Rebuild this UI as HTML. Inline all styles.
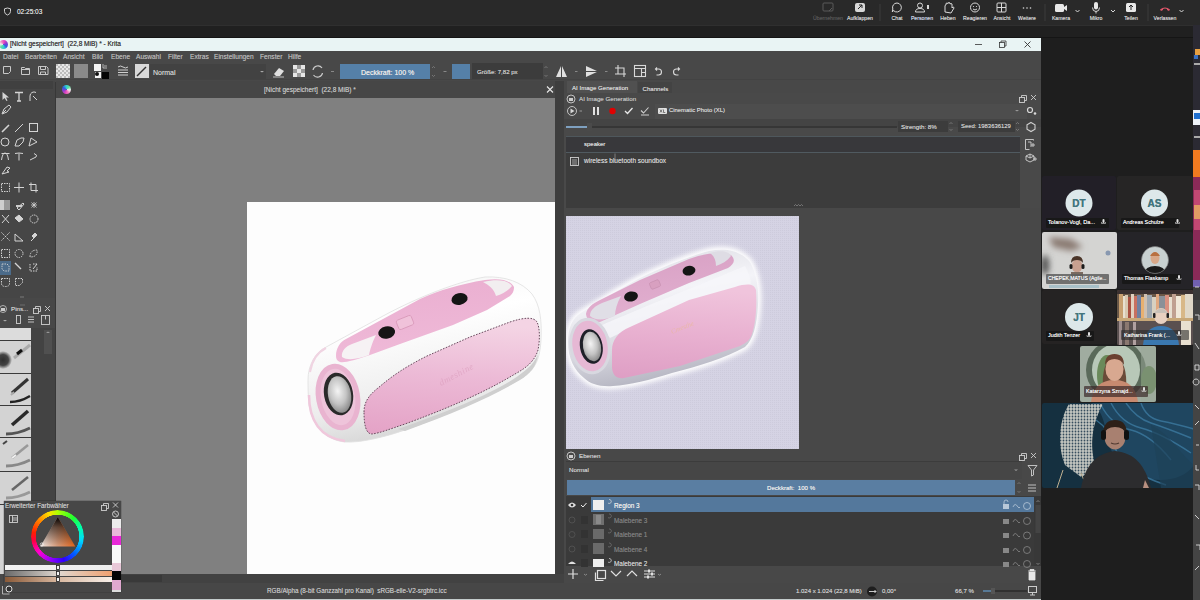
<!DOCTYPE html>
<html><head><meta charset="utf-8">
<style>
*{margin:0;padding:0;box-sizing:border-box}
html,body{width:1200px;height:600px;overflow:hidden;background:#1e1e1e;font-family:"Liberation Sans",sans-serif}
.a{position:absolute}
.t{position:absolute;white-space:nowrap;line-height:1;text-shadow:0 0 0.5px currentColor}
svg{position:absolute;overflow:visible}
.mn{font-size:6.6px;color:#b0b0b0;top:2.5px}
.tl{font-size:5.2px;color:#d0d0d0;top:16px;transform:translateX(-50%)}
.ic{stroke:#d8d8d8;fill:none;stroke-width:1}
</style></head>
<body>
<!-- ============ Teams top bar ============ -->
<div class="a" style="left:0;top:0;width:1200px;height:25px;background:#292929"></div>
<div class="a" style="left:0;top:25px;width:1200px;height:13px;background:#202020;border-top:1px solid #2f2f2f;border-bottom:1px solid #151515"></div>
<svg style="left:0;top:0" width="1200" height="25">
  <path d="M4.5 8.8 L7.5 8 L10.5 8.8 L10.5 11.5 Q10.5 14 7.5 15 Q4.5 14 4.5 11.5 Z" fill="none" stroke="#cfcfcf" stroke-width="1"/>
  <!-- Übernehmen (greyed) -->
  <g stroke="#5a5a5a" fill="none" stroke-width="1"><rect x="823" y="3" width="10" height="8" rx="1"/><path d="M829 11 l3 -3"/></g>
  <!-- Aufklappen -->
  <rect x="855" y="3" width="10" height="9" rx="2" fill="#d8d8d8"/><path d="M858 9 l4 -4 M859 5 h3 v3" stroke="#242424" stroke-width="1" fill="none"/>
  <line x1="880" y1="4" x2="880" y2="21" stroke="#3c3c3c"/>
  <!-- Chat -->
  <path d="M897 3 a4.5 4.5 0 1 1 -3.5 7.5 l-1.2 1.5 l0.5 -3 a4.5 4.5 0 0 1 4.2 -6z" class="ic"/>
  <!-- Personen -->
  <g class="ic"><circle cx="920" cy="5.5" r="2.5"/><path d="M915.5 12 q0 -3.5 4.5 -3.5 q4.5 0 4.5 3.5 z"/></g>
  <rect x="927" y="5" width="2" height="4" fill="#d8d8d8"/>
  <!-- Heben -->
  <path d="M945 12 l0 -6 q0 -1 1 -1 l0 -1.5 q1 -1 2 0 l0 -0.5 q1 -1 2 0 l0 1 q1 -1 2 0 l0 4 l1 -1 q1 0 1 1 l-3 5 z" class="ic"/>
  <!-- Reagieren -->
  <g class="ic"><circle cx="975" cy="7.5" r="4.5"/><path d="M973 9 q2 2 4 0"/></g>
  <circle cx="973.5" cy="6.5" r="0.6" fill="#d8d8d8"/><circle cx="976.5" cy="6.5" r="0.6" fill="#d8d8d8"/>
  <!-- Ansicht -->
  <g class="ic"><rect x="997" y="3" width="9" height="9" rx="1"/><path d="M1001.5 3v9M997 7.5h9"/></g>
  <!-- Weitere -->
  <circle cx="1023.5" cy="8" r="0.8" fill="#d8d8d8"/><circle cx="1027" cy="8" r="0.8" fill="#d8d8d8"/><circle cx="1030.5" cy="8" r="0.8" fill="#d8d8d8"/>
  <line x1="1045" y1="4" x2="1045" y2="21" stroke="#3c3c3c"/>
  <!-- Kamera -->
  <rect x="1055" y="4" width="9" height="8" rx="1.5" fill="#e8e8e8"/><path d="M1064 7 l3 -2 v6 l-3 -2z" fill="#e8e8e8"/>
  <path d="M1075.5 10 l2 2 l2 -2" class="ic" stroke="#bbb"/>
  <!-- Mikro -->
  <rect x="1094" y="2" width="4" height="7.5" rx="2" fill="#e8e8e8"/><path d="M1092.5 7.5 q0 4 3.5 4 q3.5 0 3.5 -4 M1096 11.5 v2" class="ic"/>
  <path d="M1111 10 l2 2 l2 -2" class="ic" stroke="#bbb"/>
  <!-- Teilen -->
  <rect x="1126" y="3" width="10" height="9" rx="1.5" fill="#e8e8e8"/><path d="M1131 10 v-5 M1129 7 l2 -2 l2 2" stroke="#242424" fill="none" stroke-width="1"/>
  <line x1="1148" y1="4" x2="1148" y2="21" stroke="#3c3c3c"/>
  <!-- Verlassen -->
  <path d="M1160 9.5 q5 -4 10 0 l-1 1.5 l-2 -1 v-1 q-2 -1 -4 0 v1 l-2 1z" fill="#e0566a"/>
  <path d="M1179.5 10 l2 2 l2 -2" class="ic" stroke="#bbb"/>
</svg>
<div class="t" style="left:17px;top:9px;font-size:6.5px;color:#d6d6d6">02:25:03</div>
<div class="t tl" style="left:828px;color:#555">Übernehmen</div>
<div class="t tl" style="left:860px">Aufklappen</div>
<div class="t tl" style="left:897px">Chat</div>
<div class="t tl" style="left:922px;color:#c8cfe0">Personen</div>
<div class="t tl" style="left:948px">Heben</div>
<div class="t tl" style="left:975px">Reagieren</div>
<div class="t tl" style="left:1002px">Ansicht</div>
<div class="t tl" style="left:1027px">Weitere</div>
<div class="t tl" style="left:1061px">Kamera</div>
<div class="t tl" style="left:1096px">Mikro</div>
<div class="t tl" style="left:1131px">Teilen</div>
<div class="t tl" style="left:1165px">Verlassen</div>
<!-- ============ Krita window ============ -->
<div class="a" style="left:0;top:38px;width:1041px;height:562px;background:#484848"></div>
<!-- title bar -->
<div class="a" style="left:0;top:38px;width:1041px;height:13px;background:#e9f4f4"></div>
<svg style="left:0;top:38px" width="1041" height="13">
  <defs><linearGradient id="kg" x1="0" y1="0" x2="1" y2="1"><stop offset="0" stop-color="#7a4cc8"/><stop offset=".5" stop-color="#e04c9c"/><stop offset="1" stop-color="#38c8d8"/></linearGradient></defs>
  
  <path d="M975 6.5h7" stroke="#333" stroke-width="0.8"/>
  <g stroke="#333" stroke-width="0.8" fill="none"><rect x="999.5" y="4.5" width="5" height="5"/><path d="M1001 4.5v-1.5h5v5h-1.5"/></g>
  <path d="M1024.5 3.5l6 6M1030.5 3.5l-6 6" stroke="#333" stroke-width="0.9"/>
</svg>
<div class="a" style="left:-1.5px;top:40px;width:9px;height:9px;border-radius:50%;background:conic-gradient(from 20deg,#e040c0,#8040d0,#3060e0,#30d0d0,#60e0a0,#f0f0f0,#f080c0,#e040c0)"></div>
<div class="t" style="left:10px;top:41px;font-size:6.5px;color:#444">[Nicht gespeichert]&nbsp; (22,8 MiB) * - Krita</div>
<!-- menubar -->
<div class="a" style="left:0;top:51px;width:1041px;height:12px;background:#484848"></div>
<div class="a" style="left:0;top:51px;height:12px">
<div class="t mn" style="left:3px">Datei</div>
<div class="t mn" style="left:25px">Bearbeiten</div>
<div class="t mn" style="left:63px">Ansicht</div>
<div class="t mn" style="left:92px">Bild</div>
<div class="t mn" style="left:111px">Ebene</div>
<div class="t mn" style="left:136px">Auswahl</div>
<div class="t mn" style="left:168px">Filter</div>
<div class="t mn" style="left:190px">Extras</div>
<div class="t mn" style="left:214px">Einstellungen</div>
<div class="t mn" style="left:260px">Fenster</div>
<div class="t mn" style="left:288px">Hilfe</div>
</div>
<!-- toolbar -->
<div class="a" style="left:0;top:63px;width:1041px;height:17px;background:#484848;border-bottom:1px solid #434343"></div>
<svg style="left:0;top:0" width="1041" height="100">
  <defs>
    <pattern id="chk" width="4" height="4" patternUnits="userSpaceOnUse"><rect width="4" height="4" fill="#e8e8e8"/><rect width="2" height="2" fill="#bdbdbd"/><rect x="2" y="2" width="2" height="2" fill="#bdbdbd"/></pattern>
  </defs>
  <g stroke="#c8c8c8" fill="none" stroke-width="1">
    <path d="M3.5 66.5h7v5l-2 2h-5z"/>
    <path d="M21.5 67.5h3l1 1h4v6h-8z M21.5 69.5h8"/>
    <path d="M38.5 66.5h8l1.5 1.5v6.5h-9.5z M40.5 66.5v3h5v-3 M40.5 74.5v-2.5h5v2.5"/>
  </g>
  <rect x="56" y="64" width="14" height="14" fill="url(#chk)"/>
  <rect x="74" y="64" width="14" height="14" fill="#8a8a8a"/>
  <rect x="94" y="64" width="7" height="7" fill="#f4f4f4"/>
  <rect x="102" y="72" width="7" height="7" fill="#050505"/>
  <rect x="95" y="72" width="6" height="6" fill="#f4f4f4"/><circle cx="97" cy="74" r="2" fill="#111"/>
  <path d="M103 64v4h4 M104 66l3 0" stroke="#ccc" stroke-width="0.8" fill="none"/>
  <g stroke="#d0d0d0" stroke-width="1" fill="none"><path d="M118 67q2.5 -2 5 0t5 0 M118 70h10M118 72.5h10M118 75h10"/></g>
  <rect x="135" y="64" width="14" height="14" fill="#d8d8d8"/><path d="M137 76l9 -9" stroke="#333" stroke-width="1.5"/>
  <!-- blend combo -->
  <rect x="150" y="64" width="116" height="15" fill="#424242"/>
  <path d="M260 71l2 1.5l2 -1.5" fill="#aaa"/>
  <!-- eraser -->
  <path d="M274 74l5 -6l5 3l-4 5h-4z" fill="#e0e0e0"/><path d="M273 77h11" stroke="#ddd" stroke-width="0.8"/>
  <!-- alpha checker -->
  <g fill="#e6e6e6"><rect x="293" y="65" width="4" height="4"/><rect x="301" y="65" width="4" height="4"/><rect x="297" y="69" width="4" height="4"/><rect x="293" y="73" width="4" height="4"/><rect x="301" y="73" width="4" height="4"/></g>
  <g fill="#9a9a9a"><rect x="297" y="65" width="4" height="4"/><rect x="293" y="69" width="4" height="4"/><rect x="301" y="69" width="4" height="4"/><rect x="297" y="73" width="4" height="4"/></g>
  <!-- reload -->
  <path d="M313 70a5 5 0 0 1 9 -2 M322.5 73a5 5 0 0 1 -9 2" stroke="#ccc" stroke-width="1.2" fill="none"/>
  <path d="M331 71.5h3" stroke="#888"/>
  <!-- opacity slider -->
  <rect x="340" y="64" width="90" height="15" fill="#5580a8"/>
  <path d="M432 68l1.5 -1.5l1.5 1.5M432 75l1.5 1.5l1.5 -1.5" stroke="#888" stroke-width="0.7" fill="none"/>
  <path d="M443.5 71.5h3" stroke="#888"/>
  <rect x="452" y="64" width="18" height="15" fill="#5580a8"/>
  <rect x="472" y="63" width="71" height="16" fill="#3c3c3c"/>
  <path d="M544.5 68l1.5 -1.5l1.5 1.5M544.5 75l1.5 1.5l1.5 -1.5" stroke="#888" stroke-width="0.7" fill="none"/>
  <!-- mirror -->
  <path d="M561 66l-5 11h5z M562 66l5 11h-5z" fill="#e0e0e0"/>
  <path d="M575 71.5h2.5" stroke="#888"/>
  <path d="M586 66l12 5.5l-12 5.5z" fill="#e0e0e0"/><path d="M586 71.5h12" stroke="#484848"/>
  <path d="M605 71.5h2.5" stroke="#888"/>
  <g stroke="#d8d8d8" stroke-width="1.1" fill="none">
    <path d="M618 65v9h8 M615 68h9v9 M615 74h3"/>
    <rect x="634.5" y="65.5" width="11" height="11"/><path d="M634.5 68.5h11M641.5 68.5v8M641.5 72.5h4"/>
    <path d="M657 67.5l-1.5 1.5l1.5 1.5 M655.5 69h3a3 3 0 0 1 0 6h-2"/>
    <path d="M678 67.5l1.5 1.5l-1.5 1.5 M679.5 69h-3a3 3 0 0 0 0 6h2"/>
  </g>
</svg>
<div class="t" style="left:153px;top:68.5px;font-size:7px;color:#c4c4c4">Normal</div>
<div class="t" style="left:361px;top:68.5px;font-size:7px;color:#e6e6e6">Deckkraft: 100 %</div>
<div class="t" style="left:477px;top:68.5px;font-size:6.1px;color:#c8c8c8">Größe: 7,82 px</div>
<!-- ============ toolbox ============ -->
<div class="a" style="left:0;top:81px;width:55px;height:217px;background:#464646"></div>
<div class="a" style="left:55px;top:82px;width:1px;height:492px;background:#383838"></div>
<div class="a" style="left:0;top:81px;width:53px;height:8px;background:#404040"></div>
<svg style="left:0;top:0" width="60" height="300">
 <g stroke="#d4d4d4" stroke-width="1" fill="none">
  <!-- row 96 -->
  <path d="M2.5 92l0 8l2 -2l2 3l1 -0.5l-1.5 -3h3z" fill="#d4d4d4" stroke="none"/>
  <path d="M15 92.5h8M19 92.5v8.5M17 101h4" stroke-width="1.3"/>
  <path d="M30 101v-5a4 4 0 0 1 6 -3.5 M33 96l4 4" />
  <!-- row 110 -->
  <path d="M2 114l2 -5l5 -4l2 2l-4 5z M3 113l3 -3"/>
  <!-- row 128 -->
  <path d="M2 132l3 -3 M5 129l4 -4" stroke-width="1.6"/>
  <path d="M15 132l8 -8"/>
  <rect x="29.5" y="123.5" width="8" height="8"/>
  <!-- row 142 -->
  <circle cx="5" cy="142" r="4"/>
  <path d="M15 146l2 -6l4 -2l3 0l-1 4l-4 4z"/>
  <path d="M29 146l2 -8l6 4z"/>
  <!-- row 155 -->
  <path d="M1.5 160q1 -7 3.5 -7q2.5 0 3.5 7 M1.5 153.5h8"/>
  <path d="M15 153.5q4 -1 8 0 M19 153.5v7"/>
  <path d="M30 160l6 -3q2 -2 -2 -3.5"/>
  <!-- row 170 -->
  <path d="M2 174l5 -7l3 1l-3 3l2 1z"/>
  <!-- row 187 -->
  <rect x="1.5" y="183.5" width="8" height="8" stroke-dasharray="1.5 1"/>
  <path d="M19 182.5v10M14 187.5h10"/>
  <path d="M31 182.5v8h7 M29 184.5h7v8"/>
  <!-- row 205 -->
  <path d="M19 210l5 -6l-1 -1l-6 5z"/>
  <path d="M31 205h6M34 202v6M31.5 202.5l5 5M36.5 202.5l-5 5" stroke-width="0.8"/>
  <!-- row 219 -->
  <path d="M2 223l7 -8M2 215l7 8" stroke-width="1"/>
  <path d="M15 218l4 -3l4 4l-4 3z" fill="#d4d4d4"/>
  <circle cx="34" cy="219" r="4" stroke-dasharray="1.5 0.8"/>
  <!-- row 236 -->
  <path d="M1.5 232.5l8 8M9.5 232.5l-8 8" stroke-dasharray="1.5 1"/>
  <path d="M15 241h8l-8 -7z"/>
  <path d="M31 241l3 -3M32 236l3 -3l2 2l-3 3z" fill="#d4d4d4"/>
  <!-- row 254 -->
  <rect x="1.5" y="249.5" width="8" height="8" stroke-dasharray="1.5 1"/>
  <circle cx="19" cy="253.5" r="4" stroke-dasharray="1.5 1"/>
  <path d="M30 257q0 -7 7 -7q1 7 -7 7z" stroke-dasharray="1.5 1"/>
  <!-- row 268 -->
  <path d="M16 264l5 5M15 263l2 2" stroke-width="1.4"/>
  <path d="M30 264v7h7v-4 M33 264h4" stroke-dasharray="1.5 1"/><path d="M33 269l4 -5" />
  <!-- row 282 -->
  <path d="M1.5 278.5v5q0 3 4 3q4 0 4 -3v-5z" stroke-dasharray="1.5 1"/>
  <path d="M15.5 278.5h7v4l-3 3h-4z" stroke-dasharray="1.5 1"/>
 </g>
 <rect x="0" y="261" width="11" height="14" fill="#4b6b8a"/>
 <path d="M2 264h5l2 2v5h-5l-2 -2z" stroke="#d4d4d4" stroke-width="0.9" fill="none" stroke-dasharray="1.5 1"/>
 <path d="M20 297h4" stroke="#888" stroke-width="0.8"/>
 <rect x="16" y="205" width="6" height="2" fill="#ccc"/>
 <rect x="0" y="200" width="10" height="10" fill="#9a9a9a"/><rect x="0" y="200" width="4" height="10" fill="#cfcfcf"/>
</svg>

<!-- ============ canvas ============ -->
<div class="a" style="left:56px;top:81px;width:499px;height:17px;background:#464646"></div>
<svg style="left:56px;top:82px" width="499" height="16">
  
  <path d="M491 4.5l6 6M497 4.5l-6 6" stroke="#e8e8e8" stroke-width="1.1"/>
</svg>
<div class="a" style="left:62px;top:84.5px;width:9px;height:9px;border-radius:50%;background:conic-gradient(from 200deg,#e040c0,#8040d0,#3060e0,#30d0d0,#60e0a0,#f0f0f0,#f080c0,#e040c0)"></div>
<div class="t" style="left:264px;top:87px;font-size:6.5px;color:#bdbdbd">[Nicht gespeichert]&nbsp; (22,8 MiB) *</div>
<div class="a" style="left:56px;top:98px;width:499px;height:476px;background:#808080"></div>
<div class="a" style="left:247px;top:202px;width:308px;height:372px;background:#fdfdfd"></div>
<!-- canvas scrollbars -->
<div class="a" style="left:555px;top:81px;width:9px;height:493px;background:#3e3e3e"></div>
<div class="a" style="left:56px;top:574px;width:508px;height:9px;background:#424242"></div>
<div class="a" style="left:56px;top:575px;width:106px;height:7px;background:#393939"></div>
<!-- status bar -->
<div class="a" style="left:0;top:583px;width:1041px;height:16px;background:#474747"></div>
<div class="a" style="left:0;top:599px;width:1041px;height:1px;background:#c5cccc"></div>
<div class="t" style="left:267px;top:588px;font-size:6.3px;color:#bdbdbd">RGB/Alpha (8-bit Ganzzahl pro Kanal)&nbsp; sRGB-elle-V2-srgbtrc.icc</div>
<div class="t" style="left:796px;top:588px;font-size:6px;color:#c8c8c8">1.024 x 1.024 (22,8 MiB)</div>
<svg style="left:864px;top:584px" width="20" height="14"><circle cx="8" cy="7.5" r="5" fill="#1e1e1e"/><path d="M5 7.5h7M10.5 6l1.5 1.5l-1.5 1.5" stroke="#ddd" stroke-width="0.9" fill="none"/></svg>
<div class="t" style="left:882px;top:588px;font-size:6px;color:#c8c8c8">0,00°</div>
<div class="t" style="left:955px;top:588px;font-size:6.1px;color:#c8c8c8">66,7 %</div>
<svg style="left:980px;top:584px" width="61" height="14">
  <path d="M3 7h10" stroke="#5d8ab0" stroke-width="1.5"/><path d="M13 7h34" stroke="#2a2a2a" stroke-width="1.5"/>
  <rect x="11" y="4" width="4" height="6" fill="#555"/>
  <rect x="48.5" y="2.5" width="8" height="6" stroke="#ccc" fill="none"/><path d="M50 11h5M52.5 8.5v2.5" stroke="#ccc"/>
</svg>
<!-- ============ brush presets docker ============ -->
<div class="a" style="left:0;top:298px;width:55px;height:276px;background:#484848"></div>
<svg style="left:0;top:298px" width="56" height="276">
  <defs>
    <radialGradient id="blob"><stop offset="0" stop-color="#303030"/><stop offset=".6" stop-color="#444"/><stop offset="1" stop-color="#d0d0d0"/></radialGradient>
  </defs>
  <path d="M20 7h5" stroke="#777" stroke-width="0.8"/>
  <circle cx="3" cy="11" r="3.5" stroke="#ccc" fill="none" stroke-width="0.8"/><rect x="1" y="10" width="4" height="3" fill="#ccc"/>
  <g stroke="#cfcfcf" stroke-width="0.9" fill="none">
    <rect x="33.5" y="10.5" width="5" height="5"/><path d="M35.5 10.5v-2h5v5h-2"/>
    <path d="M45 8l5 5M50 8l-5 5"/>
    <rect x="16.5" y="17.5" width="4" height="8"/>
    <path d="M28 19h6M28 21.5h6M28 24h6"/>
    <rect x="41.5" y="17.5" width="8" height="9"/><path d="M45.5 17.5v4"/>
  </g>
  <path d="M3 22l2 1.5l2 -1.5" fill="#aaa"/>
  <!-- list -->
  <rect x="0" y="30" width="31" height="246" fill="#d3d3d3"/>
  <rect x="0" y="30" width="31" height="12" fill="#dcdcdc"/>
  <g stroke="#3a3a3a" stroke-width="1.2"><path d="M0 42.5h31M0 75.5h31M0 107.5h31M0 139.5h31M0 173.5h31M0 206.5h31"/></g>
  <circle cx="3" cy="62" r="9" fill="url(#blob)"/>
  <path d="M14 60l16 -13" stroke="#aaa" stroke-width="3"/><path d="M17 56l5 -4" stroke="#111" stroke-width="3"/>
  <path d="M12 95l16 -14" stroke="#333" stroke-width="3"/><path d="M11 97l3 -3" stroke="#aaa" stroke-width="2"/>
  <path d="M10 104q10 0 20 -6" stroke="#222" stroke-width="2.5" fill="none"/>
  <path d="M12 127l16 -14" stroke="#2a2a2a" stroke-width="3.5"/>
  <path d="M6 136q12 0 24 -6" stroke="#555" stroke-width="3" fill="none"/>
  <path d="M12 160l16 -13" stroke="#999" stroke-width="2.5"/><path d="M12 160l4 -3" stroke="#eee" stroke-width="2"/>
  <path d="M3 146l4 -3" stroke="#444" stroke-width="2"/>
  <path d="M6 168q12 0 24 -6" stroke="#888" stroke-width="3" fill="none"/>
  <path d="M12 192l16 -13" stroke="#666" stroke-width="2.5"/>
  <path d="M6 200q12 0 24 -6" stroke="#999" stroke-width="3" fill="none"/>
  <rect x="31" y="30" width="24" height="246" fill="#434343"/>
  <rect x="44" y="32" width="8" height="24" fill="#505050"/>
  <path d="M46 35l2 -1.5l2 1.5" fill="#999"/>
</svg>

<div class="t" style="left:11px;top:306px;font-size:6.2px;color:#c8c8c8">Pins...</div>
<!-- ============ color selector (floating) ============ -->
<div class="a" style="left:4px;top:501px;width:117px;height:91px;background:#474747;box-shadow:0 0 1px #222"></div>
<div class="a" style="left:31.3px;top:509.5px;width:53px;height:53px;border-radius:50%;background:conic-gradient(#b0ff00 0deg,#20ff30 40deg,#00ffb0 70deg,#00d8ff 100deg,#0060ff 135deg,#3000ff 165deg,#9000ff 195deg,#ff00d0 230deg,#ff0040 260deg,#ff2000 280deg,#ff9000 315deg,#ffe000 340deg,#b0ff00 360deg);-webkit-mask:radial-gradient(circle,transparent 21.5px,#000 22px,#000 26.5px,transparent 27px);mask:radial-gradient(circle,transparent 21.5px,#000 22px,#000 26.5px,transparent 27px)"></div>
<div class="t" style="left:5px;top:502.5px;font-size:6.3px;color:#c0c0c0">Erweiterter Farbwähler</div>
<svg style="left:0;top:495px" width="130" height="105">
  <defs>
    <linearGradient id="tri1" x1="0" y1="0" x2="1" y2="0"><stop offset="0" stop-color="#f4ece8"/><stop offset=".5" stop-color="#d89a78"/><stop offset="1" stop-color="#e4661c"/></linearGradient>
    <linearGradient id="tri2" x1="0" y1="0" x2="0" y2="1"><stop offset="0" stop-color="#000" stop-opacity="1"/><stop offset=".35" stop-color="#000" stop-opacity=".55"/><stop offset="1" stop-color="#000" stop-opacity="0"/></linearGradient>
    <linearGradient id="sl1" x1="0" x2="1"><stop offset="0" stop-color="#f2f2f2"/><stop offset="1" stop-color="#eeeeee"/></linearGradient>
    <linearGradient id="sl2" x1="0" x2="1"><stop offset="0" stop-color="#6a6a6a"/><stop offset=".5" stop-color="#e0d8d0"/><stop offset="1" stop-color="#f0a070"/></linearGradient>
    <linearGradient id="sl3" x1="0" x2="1"><stop offset="0" stop-color="#8a5a38"/><stop offset=".5" stop-color="#d8b8a0"/><stop offset="1" stop-color="#f8f0ea"/></linearGradient>
  </defs>
  <g stroke="#cfcfcf" stroke-width="0.9" fill="none">
    <rect x="101.5" y="10.5" width="5" height="5"/><path d="M103.5 10.5v-2h5v5h-2"/>
    <path d="M113 7.5l5 5M118 7.5l-5 5"/>
    <rect x="9.5" y="20.5" width="8" height="7"/><path d="M12.5 20.5v7M12.5 23h5M12.5 25h5"/>
    <circle cx="115.5" cy="19" r="3"/><path d="M113.5 17l4 4"/>
  </g>
  <!-- wheel tri -->
  <g transform="translate(57.8 41)">
   <path d="M0 -19L17.5 10.5L-17.5 10.5Z" fill="url(#tri1)"/>
   <path d="M0 -19L17.5 10.5L-17.5 10.5Z" fill="url(#tri2)"/>
   <circle cx="-16" cy="8.5" r="1.6" stroke="#eee" fill="none" stroke-width="0.7"/>
  </g>
  <!-- sliders -->
  <rect x="5" y="70" width="107" height="5" fill="url(#sl1)"/>
  <rect x="5" y="76" width="107" height="5" fill="url(#sl2)"/>
  <rect x="5" y="82" width="107" height="5" fill="url(#sl3)"/>
  <g stroke="#1a1a1a" stroke-width="0.8" fill="#f4f4f4"><rect x="56.5" y="70.5" width="3" height="4"/><rect x="56.5" y="76.5" width="3" height="4"/><rect x="56.5" y="82.5" width="3" height="4"/></g>
  <!-- swatches -->
  <rect x="112" y="24" width="9" height="9" fill="#ececec"/>
  <rect x="112" y="33" width="9" height="8" fill="#e8b8d8"/>
  <rect x="112" y="41" width="9" height="9" fill="#e828d8"/>
  <rect x="112" y="50" width="9" height="18" fill="#f8f8f8"/>
  <rect x="112" y="68" width="9" height="8" fill="#e8c8d8"/>
  <rect x="112" y="76" width="9" height="9" fill="#050505"/>
  <rect x="112" y="85" width="9" height="10" fill="#e0a8d0"/>
  <rect x="112" y="95" width="9" height="2" fill="#ddd"/>
  <circle cx="9" cy="94" r="3" stroke="#ddd" fill="#333" stroke-width="1"/>
  <path d="M2.5 91v8h7" stroke="#ccc" fill="none" stroke-width="0.8"/>
</svg>
<!-- ============ right docker ============ -->
<div class="a" style="left:564px;top:81px;width:477px;height:502px;background:#484848"></div>
<!-- tabs -->
<div class="a" style="left:567px;top:81px;width:70px;height:12px;background:#505050"></div>
<div class="a" style="left:638px;top:82px;width:34px;height:11px;background:#434343"></div>
<div class="t" style="left:572px;top:85px;font-size:6.1px;color:#d4d4d4">AI Image Generation</div>
<div class="t" style="left:642.5px;top:85.5px;font-size:6.1px;color:#cfcfcf">Channels</div>
<!-- AI docker body -->
<div class="a" style="left:564px;top:93px;width:477px;height:115px;background:#494949"></div>
<div class="a" style="left:655px;top:104px;width:372px;height:15px;background:#4d4d4d"></div>
<div class="a" style="left:564px;top:119px;width:477px;height:8px;background:#444"></div>
<div class="t" style="left:579px;top:95.5px;font-size:6.2px;color:#bdbdbd">AI Image Generation</div>
<svg style="left:564px;top:82px" width="477" height="135">
  <g stroke="#cfcfcf" stroke-width="0.9" fill="none">
    <circle cx="7" cy="17" r="4"/>
    <rect x="455.5" y="15.5" width="5" height="5"/><path d="M457.5 15.5v-2h5v5h-2"/>
    <path d="M467 13l5 5M472 13l-5 5"/>
    <circle cx="8" cy="29" r="4.5"/>
  </g>
  <rect x="5" y="16" width="4" height="3" fill="#ccc"/>
  <path d="M6.5 26.5v5l4 -2.5z" fill="#d8d8d8"/>
  <path d="M15.5 29h2.5" stroke="#999"/>
  <rect x="29" y="25" width="2" height="8" fill="#e0e0e0"/><rect x="33" y="25" width="2" height="8" fill="#e0e0e0"/>
  <circle cx="48.5" cy="29" r="3.2" fill="#e00000"/>
  <path d="M61 29l2.5 2.5l5 -5.5" stroke="#e8e8e8" stroke-width="1.3" fill="none"/>
  <path d="M77 28.5l2.5 2.5l5 -5.5 M77 33h8" stroke="#d0d0d0" stroke-width="1.1" fill="none"/>
  <!-- combo -->
  <rect x="94" y="26" width="9" height="6" rx="1" fill="#e0e0e0"/>
  <path d="M96 27.5l2 3M98 27.5l-2 3M99.5 27.5v3h1.8" stroke="#484848" stroke-width="0.7" fill="none"/>
  <path d="M451 28l2 1.5l2 -1.5" fill="#999"/>
  <circle cx="466" cy="28" r="2.5" stroke="#d8d8d8" fill="none" stroke-width="1.2"/><circle cx="471" cy="31.5" r="1.3" fill="#d8d8d8"/>
  <!-- slider -->
  <rect x="2" y="44" width="331" height="2" fill="#363636"/>
  <rect x="2" y="44" width="23" height="2" fill="#7ea0c0"/>
  <rect x="23" y="41" width="5" height="8" fill="#4a4a4a"/>
  <!-- strength / seed -->
  <rect x="334" y="39" width="50" height="11" fill="#3c3c3c"/>
  <path d="M385.5 42l1.5 -1.5l1.5 1.5M385.5 47l1.5 1.5l1.5 -1.5" stroke="#888" stroke-width="0.7" fill="none"/>
  <rect x="394" y="39" width="57" height="11" fill="#3c3c3c"/>
  <path d="M452 42l1.5 -1.5l1.5 1.5M452 47l1.5 1.5l1.5 -1.5" stroke="#888" stroke-width="0.7" fill="none"/>
  <path d="M467 40.5l4 2.3v4.5l-4 2.3l-4 -2.3v-4.5z" stroke="#d0d0d0" fill="none" stroke-width="1.1"/>
  <!-- right side icons -->
  <g stroke="#d0d0d0" stroke-width="0.9" fill="none">
    <path d="M461.5 57.5h8v1 M461.5 57.5v10h4 M464 60h3v5 M467 63h4M469 61v4"/>
    <path d="M462 74l4 -2l4 2v4l-4 2l-4 -2z M466 72v4M462 74l4 2l4 -2"/>
  </g>
  <path d="M469 77h4M471 75v4" stroke="#d0d0d0" stroke-width="0.9"/>
</svg>
<div class="t" style="left:669px;top:107.5px;font-size:5.9px;color:#d0d0d0">Cinematic Photo (XL)</div>
<div class="t" style="left:901px;top:123.5px;font-size:6.2px;color:#c8c8c8">Strength: 8%</div>
<div class="t" style="left:961px;top:123.5px;font-size:5.9px;color:#c8c8c8">Seed: 1983636129</div>
<!-- prompt box -->
<div class="a" style="left:566px;top:136px;width:454px;height:17px;background:#38383b;border-top:1px solid #4e575c;border-bottom:1px solid #505a60"></div>
<div class="t" style="left:584px;top:140.5px;font-size:6px;color:#d8d8d8">speaker</div>
<div class="a" style="left:566px;top:153px;width:454px;height:56px;background:#3c3c3c"></div>
<div class="t" style="left:584px;top:157.5px;font-size:6.5px;color:#c8c8c8">wireless bluetooth soundbox</div>
<svg style="left:564px;top:150px" width="250" height="60">
  <rect x="6.5" y="7.5" width="8" height="8" stroke="#cfcfcf" fill="none" stroke-width="0.9"/><path d="M8 10h5M8 12h5M8 14h5" stroke="#cfcfcf" stroke-width="0.7"/>
  <path d="M51 3.5v8" stroke="#aaa" stroke-width="0.6"/>
  <path d="M230 56l1.5 -1.5l1.5 1.5l1.5 -1.5l1.5 1.5l1.5 -1.5l1.5 1.5" stroke="#999" stroke-width="0.6" fill="none"/>
</svg>
<!-- preview area -->
<div class="a" style="left:564px;top:208px;width:477px;height:241px;background:#484848"></div>
<div class="a" id="prev" style="left:566px;top:216px;width:233px;height:233px;background:#d4d2e2;overflow:hidden"></div>
<div class="a" style="left:796px;top:449px;width:6px;height:1px;background:#777"></div>

<!-- Ebenen -->
<div class="a" style="left:564px;top:449px;width:477px;height:12px;background:#484848"></div>
<div class="t" style="left:579px;top:452.5px;font-size:6.2px;color:#c8c8c8">Ebenen</div>
<svg style="left:564px;top:449px" width="477" height="134">
  <g stroke="#cfcfcf" stroke-width="0.9" fill="none">
    <circle cx="7" cy="7" r="4"/>
    <rect x="455.5" y="6.5" width="5" height="5"/><path d="M457.5 6.5v-2h5v5h-2"/>
    <path d="M467 4l5 5M472 4l-5 5"/>
    <path d="M464 16.5h9l-3.5 4.5v5l-2 1v-6z"/>
    <path d="M464 36h8M464 39h8M464 42h8"/>
  </g>
  <rect x="5" y="6" width="4" height="3" fill="#ccc"/>
</svg>
<div class="a" style="left:566px;top:461px;width:456px;height:18px;background:#464646;border-top:1px solid #3c3c3c"></div>
<div class="t" style="left:569px;top:467px;font-size:6.2px;color:#c8c8c8">Normal</div>
<svg style="left:1013px;top:468px" width="8" height="6"><path d="M1 1.5l2 1.5l2 -1.5" fill="#999"/></svg>
<div class="a" style="left:567px;top:480px;width:448px;height:15px;background:#5a7ea2"></div>
<div class="t" style="left:767px;top:485px;font-size:6.1px;color:#e8e8e8">Deckkraft:&nbsp; 100 %</div>
<svg style="left:1015px;top:480px" width="10" height="16"><path d="M2.5 4l1.5 -1.5l1.5 1.5M2.5 11l1.5 1.5l1.5 -1.5" stroke="#888" stroke-width="0.7" fill="none"/></svg>
<!-- layer list -->
<div class="a" style="left:566px;top:496px;width:468px;height:70px;background:#3a3a3a"></div>
<div class="a" style="left:591px;top:497px;width:443px;height:15px;background:#54789c"></div>
<div class="a" style="left:1034px;top:496px;width:7px;height:70px;background:#383838"></div>
<svg style="left:566px;top:497px" width="475" height="70">
  <g fill="#e0e0e0"><path d="M2 8q4 -5 8 0q-4 5 -8 0z"/></g>
  <circle cx="6" cy="8" r="1.3" fill="#333"/>
  <path d="M15 8l2 2l3.5 -4" stroke="#eee" stroke-width="1" fill="none"/>
  <rect x="27" y="3" width="11" height="10" fill="#efefef"/>
  <path d="M43 2.5a2 2 0 1 1 -1 3.5" stroke="#ddd" stroke-width="0.7" fill="none"/>
  <g fill="#555">
    <rect x="27" y="17" width="11" height="11" fill="#707070"/>
    <rect x="27" y="32" width="11" height="10" fill="#6a6a6a"/>
    <rect x="27" y="46" width="11" height="11" fill="#6a6a6a"/>
  </g>
  <rect x="30" y="18" width="5" height="9" fill="#8a8a8a"/>
  <g stroke="#555" stroke-width="0.8" fill="none"><circle cx="6" cy="23" r="3"/><circle cx="6" cy="37.5" r="3"/><circle cx="6" cy="52" r="3"/></g>
  <g fill="#333"><rect x="15" y="19" width="7" height="8"/><rect x="15" y="33" width="7" height="8"/><rect x="15" y="48" width="7" height="8"/><rect x="15" y="62" width="7" height="8"/></g>
  <path d="M2 67q4 -5 8 0" fill="#e0e0e0"/>
  <rect x="27" y="62" width="11" height="8" fill="#eee"/>
  <g stroke="#777" stroke-width="0.7" fill="none"><path d="M43 17a2 2 0 1 1 -1 3.5M43 32a2 2 0 1 1 -1 3.5M43 46a2 2 0 1 1 -1 3.5"/></g>
  <path d="M43 61.5a2 2 0 1 1 -1 3.5" stroke="#ddd" stroke-width="0.7" fill="none"/>
  <!-- right icons -->
  <g fill="#b8c8d8"><rect x="437" y="7" width="6" height="5"/></g>
  <g stroke="#b8c8d8" stroke-width="0.8" fill="none"><path d="M438 7v-2a2 2 0 0 1 4 0"/><path d="M447 10q2 -5 5 0q1 2 2 0"/><circle cx="461" cy="9" r="3.5"/></g>
  <g fill="#888"><rect x="437" y="22" width="6" height="5"/><rect x="437" y="36" width="6" height="5"/><rect x="437" y="51" width="6" height="5"/><rect x="437" y="65" width="6" height="5"/></g>
  <g stroke="#888" stroke-width="0.8" fill="none">
    <path d="M447 25q2 -5 5 0q1 2 2 0M447 39q2 -5 5 0q1 2 2 0M447 54q2 -5 5 0q1 2 2 0M447 68q2 -5 5 0q1 2 2 0"/>
    <circle cx="461" cy="24" r="3.5"/><circle cx="461" cy="38.5" r="3.5"/><circle cx="461" cy="53" r="3.5"/><circle cx="461" cy="67" r="3.5"/>
  </g>
  <path d="M470.5 5l1.5 -1.5l1.5 1.5M470.5 66l1.5 1.5l1.5 -1.5" stroke="#999" stroke-width="0.7" fill="none"/>
  <rect x="469.5" y="8" width="5" height="28" fill="#444"/>
</svg>
<div class="t" style="left:614px;top:502.5px;font-size:6.4px;color:#e8e8e8">Region 3</div>
<div class="t" style="left:614px;top:517.5px;font-size:6.4px;color:#7a7a7a">Malebene 3</div>
<div class="t" style="left:614px;top:532px;font-size:6.4px;color:#7a7a7a">Malebene 1</div>
<div class="t" style="left:614px;top:546.5px;font-size:6.4px;color:#7a7a7a">Malebene 4</div>
<div class="t" style="left:614px;top:561px;font-size:6.4px;color:#c8c8c8">Malebene 2</div>
<!-- layer buttons -->
<svg style="left:564px;top:566px" width="477" height="16">
  <g stroke="#e0e0e0" stroke-width="1.2" fill="none">
    <path d="M9 3v10M4 8h10"/>
    <rect x="33.5" y="4.5" width="8" height="8"/><path d="M31.5 6.5v8h8"/>
    <path d="M47 5l5 5l5 -5"/>
    <path d="M63 10l5 -5l5 5"/>
    <path d="M80 5h11M80 8h11M80 11h11"/>
  </g>
  <g fill="#e0e0e0"><rect x="84" y="3.5" width="2" height="3"/><rect x="87" y="6.5" width="2" height="3"/><rect x="83" y="9.5" width="2" height="3"/></g>
  <path d="M20 8l1.5 1.2l1.5 -1.2M94 8l1.5 1.2l1.5 -1.2" stroke="#999" stroke-width="0.8" fill="none"/>
  <path d="M464 5h8M466 5v-1.5h4v1.5 M465 6h6v8h-6z" fill="#e8e8e8" stroke="#e8e8e8" stroke-width="0.8"/>
</svg>
<!-- ============ speakers ============ -->
<svg style="left:0;top:0" width="1200" height="600">
  <defs>
    <clipPath id="cpMain"><rect x="247" y="202" width="308" height="372"/></clipPath>
    <clipPath id="cpPrev"><rect x="566" y="216" width="233" height="233"/></clipPath>
    <linearGradient id="bodyG" x1="0" y1="0" x2="0.25" y2="1">
      <stop offset="0" stop-color="#f2f2f2"/><stop offset=".35" stop-color="#ffffff"/><stop offset=".8" stop-color="#ededed"/><stop offset="1" stop-color="#d8d8d8"/>
    </linearGradient>
    <linearGradient id="topG" x1="0" y1="0" x2="0.2" y2="1">
      <stop offset="0" stop-color="#eaaed0"/><stop offset="1" stop-color="#efbad8"/>
    </linearGradient>
    <linearGradient id="frontG" x1="0.1" y1="0" x2="0" y2="1">
      <stop offset="0" stop-color="#f4d4e4"/><stop offset=".45" stop-color="#ecbad6"/><stop offset="1" stop-color="#e4a2c6"/>
    </linearGradient>
    <radialGradient id="grilleG" cx=".45" cy=".4" r=".65">
      <stop offset="0" stop-color="#f4f4f4"/><stop offset=".55" stop-color="#c4c4c4"/><stop offset="1" stop-color="#808080"/>
    </radialGradient>
    <filter id="glow" x="-20%" y="-20%" width="140%" height="140%"><feGaussianBlur stdDeviation="2.5"/></filter>
    <filter id="sb"><feGaussianBlur stdDeviation="0.5"/></filter>
    <pattern id="dith" width="2" height="2" patternUnits="userSpaceOnUse"><rect width="2" height="2" fill="#d5d3e4"/><rect width="1" height="1" fill="#cdcbdc"/></pattern>
    <path id="bodyP" d="M308 380 C308 365 315 352 328 346 L383 316 C420 296 460 281 485 277 C505 276 522 282 532 294 C540 305 542 320 541 340 C540 362 533 372 520 379 C495 394 455 412 405 430 C385 437 360 443 345 442 C325 440 312 425 309 405 C308 395 308 387 308 380 Z"/>
    <path id="frontP" d="M364 412 C364 402 369 395 378 388 C392 376 405 367 427 356 L470 337 L510 322 C525 317 534 317 537 322 C540 328 540 340 538 350 C535 360 528 367 515 374 C495 386 465 402 405 424 C390 429 380 433 372 434 C366 434 364 425 364 412 Z"/>
    <g id="spk">
      <use href="#bodyP" fill="url(#bodyG)" stroke="#e0e0e0" stroke-width="0.8"/>
      <path d="M398 429 C455 409 495 392 518 376 C528 369 535 362 538 354 C537 366 530 374 520 380 C495 395 455 413 405 431 Z" fill="#cfcfcf"/>
      <!-- top panel -->
      <path d="M336 356 C336 348 340 342 346 339 L383 319 L420 299 C440 290 460 284 485 280 C500 278 510 280 514 287 C514 292 512 294 510 296 L487 310 L453 325 L400 344 L370 355 C355 360 345 363 340 362 C337 361 336 359 336 356 Z" fill="url(#topG)"/>
      <path d="M342 357 C341 351 346 346 352 344 L376 335 C372 343 370 350 369 355 C358 359 348 361 342 357 Z" fill="#f6f2f4"/>
      <path d="M483 282 C497 279 508 280 512 286 C508 291 502 294 496 296 C494 289 489 285 483 282 Z" fill="#f2eef0"/>
      <ellipse cx="386.7" cy="332.5" rx="8.5" ry="6.2" transform="rotate(-12 386.7 332.5)" fill="#151515"/>
      <ellipse cx="459.5" cy="299" rx="8.2" ry="5.8" transform="rotate(-12 459.5 299)" fill="#151515"/>
      <rect x="397" y="317.5" width="16" height="10" rx="2" transform="rotate(-22 405 322.5)" fill="#f0c2da" stroke="#d898b8" stroke-width="0.8"/>
      <!-- front panel -->
      <use href="#frontP" fill="url(#frontG)"/>
      <text x="441" y="386" font-size="9" fill="#d898b8" opacity=".55" transform="rotate(-28 441 386)" font-family="Liberation Serif" font-style="italic" letter-spacing="0.5">dmeshine</text>
      <!-- end cap -->
      <path d="M310 372 C312 360 318 352 326 348" stroke="#f0d4e2" stroke-width="2" fill="none"/>
      <path d="M309 395 C309 420 320 438 345 441" stroke="#f0c8dc" stroke-width="2.5" fill="none"/>
      <ellipse cx="338" cy="397" rx="19.5" ry="31" transform="rotate(-10 338 397)" fill="#eec4da" stroke="#e9b4d0" stroke-width="5"/>
      <ellipse cx="338.5" cy="394" rx="14.5" ry="21.5" transform="rotate(-10 338.5 394)" fill="#2a2a2a"/>
      <ellipse cx="339.5" cy="394.5" rx="11.5" ry="18.5" transform="rotate(-10 339.5 394.5)" fill="url(#grilleG)"/>
    </g>
  <linearGradient id="bodyG2" x1="0" y1="0" x2="0.25" y2="1">
      <stop offset="0" stop-color="#d8d8e0"/><stop offset=".4" stop-color="#f4f4f8"/><stop offset=".75" stop-color="#d8d8e0"/><stop offset="1" stop-color="#b8b8c4"/>
    </linearGradient>
    <linearGradient id="topG2" x1="0" y1="0" x2="0.2" y2="1">
      <stop offset="0" stop-color="#d8a0c4"/><stop offset="1" stop-color="#e2b0d0"/>
    </linearGradient>
    <linearGradient id="frontG2" x1="0.1" y1="0" x2="0" y2="1">
      <stop offset="0" stop-color="#f0c4dc"/><stop offset=".5" stop-color="#e8b0d0"/><stop offset="1" stop-color="#de9ec4"/>
    </linearGradient>
    <g id="spk2">
      <use href="#bodyP" fill="url(#bodyG2)" stroke="#d0d0d8" stroke-width="0.8"/>
      <path d="M398 429 C455 409 495 392 518 376 C528 369 535 362 538 354 C537 366 530 374 520 380 C495 395 455 413 405 431 Z" fill="#cfcfcf"/>
      <!-- top panel -->
      <path d="M336 356 C336 348 340 342 346 339 L383 319 L420 299 C440 290 460 284 485 280 C500 278 510 280 514 287 C514 292 512 294 510 296 L487 310 L453 325 L400 344 L370 355 C355 360 345 363 340 362 C337 361 336 359 336 356 Z" fill="url(#topG2)"/>
      <path d="M342 357 C341 351 346 346 352 344 L376 335 C372 343 370 350 369 355 C358 359 348 361 342 357 Z" fill="#e4e2ea"/>
      <path d="M483 282 C497 279 508 280 512 286 C508 291 502 294 496 296 C494 289 489 285 483 282 Z" fill="#dedce4"/>
      <ellipse cx="386.7" cy="332.5" rx="8.5" ry="6.2" transform="rotate(-12 386.7 332.5)" fill="#151515"/>
      <ellipse cx="459.5" cy="299" rx="8.2" ry="5.8" transform="rotate(-12 459.5 299)" fill="#151515"/>
      <rect x="397" y="317.5" width="16" height="10" rx="2" transform="rotate(-22 405 322.5)" fill="#f0c2da" stroke="#d898b8" stroke-width="0.8"/>
      <!-- front panel -->
      <use href="#frontP" fill="url(#frontG2)"/>
      <text x="441" y="386" font-size="9" fill="#d898b8" opacity=".55" transform="rotate(-28 441 386)" font-family="Liberation Serif" font-style="italic" letter-spacing="0.5">dmeshine</text>
      <!-- end cap -->
      <path d="M310 372 C312 360 318 352 326 348" stroke="#f0d4e2" stroke-width="2" fill="none"/>
      <path d="M309 395 C309 420 320 438 345 441" stroke="#f0c8dc" stroke-width="2.5" fill="none"/>
      <ellipse cx="338" cy="397" rx="19.5" ry="31" transform="rotate(-10 338 397)" fill="#eec4da" stroke="#e9b4d0" stroke-width="5"/>
      <ellipse cx="338.5" cy="394" rx="14.5" ry="21.5" transform="rotate(-10 338.5 394)" fill="#2a2a2a"/>
      <ellipse cx="339.5" cy="394.5" rx="11.5" ry="18.5" transform="rotate(-10 339.5 394.5)" fill="url(#grilleG)"/>
    </g>
  </defs>
  <g clip-path="url(#cpMain)">
    <use href="#spk"/>
    <use href="#frontP" fill="none" stroke="#6a4a5e" stroke-width="1" stroke-dasharray="1.6 1.4"/>
  </g>
  <g clip-path="url(#cpPrev)">
    <rect x="566" y="216" width="233" height="233" fill="url(#dith)"/>
    <path d="M568 342 C568 328 572 318 582 312 C600 302 620 288 640 278 C665 266 690 256 709 251 C725 248 740 250 750 262 C757 274 759 290 758 305 C757 325 753 340 745 347 C725 358 700 366 672 373 C650 380 630 385 613 386 C600 387 590 384 584 378 C574 370 568 358 568 342 Z" fill="#ffffff" stroke="#ffffff" stroke-width="6" filter="url(#glow)"/>
    <path d="M568 342 C568 328 572 318 582 312 C600 302 620 288 640 278 C665 266 690 256 709 251 C725 248 740 250 750 262 C757 274 759 290 758 305 C757 325 753 340 745 347 C725 358 700 366 672 373 C650 380 630 385 613 386 C600 387 590 384 584 378 C574 370 568 358 568 342 Z" fill="url(#bodyG2)"/>
    <path d="M600 326 C640 308 700 285 745 266 C750 276 752 282 750 286 C700 300 650 318 610 338 Z" fill="#f6f6fa" opacity=".8"/>
    <path d="M586 314 C587 308 592 304 600 300 L640 280 L689 259 C705 253 722 251 731 255 C736 260 734 264 728 268 L689 283 L640 304 L600 322 C594 324 587 322 586 314 Z" fill="url(#topG2)"/>
    <path d="M590 316 C590 310 595 306 602 303 L621 296 C617 303 615 310 615 316 C605 320 595 321 590 316 Z" fill="#e0dee6"/>
    <path d="M710 253 C720 250 729 251 731 256 C727 261 722 264 716 266 C716 260 714 256 710 253 Z" fill="#dedce4"/>
    <ellipse cx="631" cy="296.5" rx="7" ry="5" transform="rotate(-12 631 296.5)" fill="#151515"/>
    <ellipse cx="689" cy="270.7" rx="6.5" ry="4.8" transform="rotate(-12 689 270.7)" fill="#151515"/>
    <rect x="650" y="281" width="10" height="7" rx="1.5" transform="rotate(-22 655 284.5)" fill="#d8a0c0" stroke="#c890b0" stroke-width="0.7"/>
    <path d="M612 350 C612 340 618 332 630 327 L689 300 L735 287 C748 283 754 284 756 290 C757 305 756 322 752 334 C750 340 746 343 740 346 L680 366 L624 378 C617 379 613 376 612 368 Z" fill="url(#frontG2)"/>
    <text x="672" y="334" font-size="7" fill="#e8b890" opacity=".6" transform="rotate(-22 672 334)" font-family="Liberation Serif" font-style="italic">Cmesthe</text>
    <ellipse cx="590" cy="346" rx="19" ry="27" transform="rotate(-10 590 346)" fill="#e6b8d4" stroke="#d8d8e0" stroke-width="3"/>
    <ellipse cx="591.3" cy="346.5" rx="11.3" ry="17.5" transform="rotate(-10 591.3 346.5)" fill="#1e2028"/>
    <ellipse cx="592" cy="346.5" rx="9" ry="15" transform="rotate(-10 592 346.5)" fill="url(#grilleG)"/>
  </g>
</svg>
<!-- ============ Teams gallery ============ -->
<svg style="left:1041px;top:25px" width="159" height="575">
  <defs>
    <filter id="bl1" x="-100%" y="-100%" width="300%" height="300%"><feGaussianBlur stdDeviation="3"/></filter>
    <filter id="bl05"><feGaussianBlur stdDeviation="0.6"/></filter>
    <clipPath id="c3"><rect x="1" y="207" width="75" height="57" rx="2"/></clipPath>
    <clipPath id="c6"><rect x="76" y="265" width="76" height="55" rx="2"/></clipPath>
    <clipPath id="c7"><rect x="39" y="321" width="76" height="56" rx="2"/></clipPath>
    <clipPath id="c8"><rect x="1" y="378" width="152" height="85" rx="2"/></clipPath>
    <clipPath id="cTh"><circle cx="114" cy="235" r="13.5"/></clipPath>
  </defs>
  <!-- tile DT -->
  <rect x="1" y="151" width="74" height="54" rx="2" fill="#221f27"/>
  <circle cx="38" cy="178" r="13.5" fill="#dde8ea"/>
  <rect x="5" y="193" width="63" height="10" rx="1" fill="#181818"/>
  <!-- tile AS -->
  <rect x="76" y="151" width="76" height="54" rx="2" fill="#262525"/>
  <circle cx="113.5" cy="178" r="13.5" fill="#dde8ea"/>
  <rect x="80" y="193" width="58" height="10" rx="1" fill="#181818"/>
  <!-- tile CHEPEK -->
  <g clip-path="url(#c3)">
    <rect x="1" y="207" width="75" height="57" fill="#d4d4d2"/>
    <path d="M8 212 L30 214 L42 222 L30 226 L12 222 Z" fill="#8a7a72" filter="url(#bl1)"/>
    <ellipse cx="4" cy="240" rx="4" ry="10" fill="#4a4a4a" filter="url(#bl1)"/>
    <circle cx="67" cy="228" r="2.5" fill="#8898b0" filter="url(#bl05)"/>
    <ellipse cx="36" cy="241" rx="5.5" ry="6.5" fill="#c8a090"/>
    <path d="M30 238q0 -7 6 -7q6 0 6 7q-2 -3 -6 -3q-4 0 -6 3z" fill="#4a3428"/>
    <rect x="28.5" y="239" width="3" height="5" rx="1.5" fill="#1a1a1a"/><rect x="40.5" y="239" width="3" height="5" rx="1.5" fill="#1a1a1a"/>
    <rect x="30" y="247" width="12" height="5" fill="#7a6a60"/>
    <rect x="8" y="260" width="50" height="3" fill="#a8c0c8"/>
    <rect x="5" y="249" width="63" height="10" rx="1" fill="#5e5e5e" opacity=".85"/>
  </g>
  <!-- tile Thomas -->
  <rect x="76" y="207" width="76" height="57" rx="2" fill="#252428"/>
  <g clip-path="url(#cTh)">
    <rect x="100" y="221" width="28" height="28" fill="#c8d0d0"/>
    <ellipse cx="114" cy="233" rx="4.5" ry="6" fill="#d8a888"/>
    <path d="M109 231q5 -8 10 0" fill="#b87040"/>
    <path d="M102 250q2 -9 12 -9q10 0 12 9z" fill="#1a1a1a"/>
  </g>
  <circle cx="114" cy="235" r="13.5" fill="none" stroke="#777" stroke-width="0.6"/>
  <rect x="81" y="249" width="59" height="10" rx="1" fill="#181818"/>
  <!-- tile JT -->
  <rect x="1" y="265" width="74" height="54" rx="2" fill="#252323"/>
  <circle cx="38" cy="292" r="14" fill="#dde8ea"/>
  <rect x="5" y="306" width="48" height="10" rx="1" fill="#181818"/>
  <!-- tile Katharina bookshelf -->
  <g clip-path="url(#c6)">
    <rect x="76" y="265" width="76" height="55" fill="#6a5848"/>
    <rect x="76" y="265" width="76" height="4" fill="#3a3030"/>
    <g>
      <rect x="78" y="269" width="4" height="24" fill="#c8a070"/><rect x="82" y="271" width="2" height="22" fill="#e8e0d0"/>
      <rect x="84" y="270" width="3" height="23" fill="#d8c8b0"/><rect x="87" y="272" width="3" height="21" fill="#a85040"/>
      <rect x="90" y="269" width="3" height="24" fill="#e0d0c0"/><rect x="93" y="271" width="3" height="22" fill="#c87060"/>
      <rect x="96" y="270" width="4" height="23" fill="#7080a0"/><rect x="100" y="272" width="3" height="21" fill="#e8b070"/>
      <rect x="103" y="269" width="3" height="24" fill="#d0c0b0"/><rect x="106" y="270" width="5" height="23" fill="#a0a8b0"/>
      <rect x="111" y="272" width="4" height="21" fill="#d8d0c0"/><rect x="115" y="269" width="3" height="24" fill="#e0a880"/>
      <rect x="118" y="271" width="6" height="22" fill="#8a9098"/><rect x="124" y="270" width="4" height="23" fill="#d89080"/>
      <rect x="128" y="272" width="3" height="21" fill="#e8e0d0"/><rect x="131" y="269" width="4" height="24" fill="#c0a090"/>
      <rect x="135" y="271" width="5" height="22" fill="#f0e8d8"/><rect x="140" y="270" width="4" height="23" fill="#d8b888"/>
      <rect x="144" y="269" width="8" height="24" fill="#e0d8c8"/>
    </g>
    <rect x="76" y="293" width="76" height="3" fill="#c8a878"/>
    <rect x="76" y="296" width="76" height="24" fill="#5a5050"/>
    <rect x="78" y="296" width="3" height="24" fill="#a09090"/><rect x="84" y="297" width="4" height="23" fill="#8a7870"/>
    <rect x="92" y="297" width="3" height="23" fill="#b0a0a0"/><rect x="140" y="296" width="10" height="24" fill="#e8e0d0"/>
    <ellipse cx="120" cy="291" rx="7" ry="8" fill="#e8d0c0"/>
    <path d="M113 288q7 -9 14 0" fill="#c8c0b8"/>
    <rect x="112" y="288" width="2.5" height="5" rx="1" fill="#222"/><rect x="125.5" y="288" width="2.5" height="5" rx="1" fill="#222"/>
    <path d="M102 320q2 -19 18 -19q16 0 18 19z" fill="#3a78b0"/>
    <rect x="80" y="305" width="68" height="10" rx="1" fill="#2a2a2a" opacity=".6"/>
  </g>
  <!-- tile Katarzyna -->
  <g clip-path="url(#c7)">
    <rect x="39" y="321" width="76" height="56" fill="#a0aca0"/>
    <ellipse cx="75" cy="345" rx="30" ry="30" fill="#5a6a5a"/>
    <ellipse cx="75" cy="345" rx="24" ry="26" fill="#b8c8b8"/>
    <ellipse cx="66" cy="350" rx="10" ry="20" fill="#6a8a5a"/>
    <ellipse cx="108" cy="355" rx="8" ry="14" fill="#5a7a4a"/>
    <rect x="100" y="321" width="15" height="56" fill="#9aa898" opacity=".5"/>
    <path d="M62 365q-2 -30 11.5 -32q13.5 2 11.5 32z" fill="#6a4a38"/>
    <path d="M50 377q3 -22 23.5 -22q20.5 0 23.5 22z" fill="#c88a70"/>
    <ellipse cx="73.5" cy="344" rx="9" ry="12" fill="#d8a890"/>
    <path d="M64 340q0 -11 9.5 -11q9.5 0 9.5 11q-3 -6 -9.5 -6q-6.5 0 -9.5 6z" fill="#6a4030"/>
    <rect x="43" y="361" width="64" height="11" rx="1" fill="#3a2a2a" opacity=".7"/>
  </g>
  <!-- big tile -->
  <g clip-path="url(#c8)">
    <rect x="1" y="378" width="152" height="85" fill="#153040"/>
    <path d="M50 378 C70 390 60 420 80 440 C100 460 140 460 153 440 L153 378 Z" fill="#1f4660"/>
    <g stroke="#3c7aa0" stroke-width="1.5" fill="none" opacity=".8">
      <path d="M60 380q10 20 30 25t40 30"/><path d="M70 378q10 20 30 25t50 25"/><path d="M85 378q10 15 25 20t40 15"/>
      <path d="M100 378q5 15 20 18t33 8"/><path d="M55 395q15 10 20 30t50 35"/>
    </g>
    <path d="M110 400 C130 410 140 430 153 440 L153 463 L120 463 Z" fill="#1e4258" opacity=".7"/>
    <defs><pattern id="mesh" width="3" height="3" patternUnits="userSpaceOnUse"><rect width="3" height="3" fill="#d8d8d0"/><circle cx="1.5" cy="1.5" r="0.9" fill="#3a5060"/></pattern></defs>
    <path d="M28 379 C18 395 16 420 24 440 L40 452 L56 444 C48 425 50 400 62 379 Z" fill="url(#mesh)" opacity=".9"/>
    <path d="M22 445 l-6 18 M40 448 l6 15" stroke="#c0b090" stroke-width="1"/>
    <ellipse cx="74" cy="412" rx="10.5" ry="12.5" fill="#a88070"/>
    <path d="M62 410q0 -15 12 -15q12 0 12 15q-3 -8 -12 -8q-9 0 -12 8z" fill="#2e2018"/>
    <rect x="60" y="405" width="5" height="10" rx="2.5" fill="#111"/><rect x="83" y="405" width="5" height="10" rx="2.5" fill="#111"/>
    <path d="M70 418q4 2 8 0" stroke="#503830" stroke-width="1.2" fill="none"/>
    <path d="M40 463 C44 440 56 428 74 426 C94 428 104 440 110 463 Z" fill="#2c2c2e"/>
    <path d="M104 455 l4 8 h-6z" fill="#b89080"/>
  </g>
  <!-- desktop strip -->
  <rect x="152" y="0" width="7" height="575" fill="#444"/>
  <rect x="152" y="0" width="7" height="175" fill="#2b2a33"/>
  <rect x="154" y="24" width="5" height="6" fill="#e8a040"/><rect x="153" y="30" width="4" height="4" fill="#3a70c0"/>
  <rect x="153" y="38" width="6" height="2" fill="#aaa"/>
  <rect x="152" y="85" width="7" height="15" fill="#eef2f8"/><rect x="153" y="88" width="6" height="6" fill="#2070d0"/>
  <rect x="153" y="111" width="6" height="2" fill="#aaa"/>
  <rect x="152" y="125" width="7" height="27" fill="#f07a20"/>
  <rect x="152" y="152" width="7" height="103" fill="#8a2a58"/>
  <rect x="153" y="165" width="6" height="40" fill="#d0507a" opacity=".8"/>
  <rect x="153" y="180" width="6" height="14" fill="#e8b060" opacity=".8"/>
  <rect x="152" y="255" width="7" height="7" fill="#7060b0"/>
  <rect x="152" y="262" width="7" height="13" fill="#3a3a3a"/>
  <g stroke="#ddd" stroke-width="0.9" fill="none">
    <path d="M154 262h4M154 290h4v5M154 318l4 6M154 340h4v5h-4zM155 360a3 3 0 1 1 0.1 0M154 380l4 4M154 400l4 -4M155 420h3M155 440v5h3M154 460h4v5M154 490l4 4M155 520h4v5M154 545l4 -4"/>
  </g>
</svg>
<div class="t" style="left:1079px;top:198.5px;font-size:10px;font-weight:bold;color:#44767e;transform:translateX(-50%)">DT</div>
<div class="t" style="left:1154.5px;top:198.5px;font-size:10px;font-weight:bold;color:#44767e;transform:translateX(-50%)">AS</div>
<div class="t" style="left:1079px;top:312.5px;font-size:10px;font-weight:bold;color:#44767e;transform:translateX(-50%)">JT</div>
<div class="t" style="left:1048px;top:220px;font-size:5.6px;color:#f0f0f0">Tolanov-Vogl, Da...</div>
<div class="t" style="left:1123px;top:220px;font-size:5.4px;color:#f0f0f0">Andreas Schulze</div>
<div class="t" style="left:1048px;top:276px;font-size:5.1px;color:#f4f4f4">CHEPEK,MATUS (Agile...</div>
<div class="t" style="left:1124px;top:276px;font-size:5.4px;color:#f0f0f0">Thomas Flaskamp</div>
<div class="t" style="left:1048px;top:333px;font-size:5.4px;color:#f0f0f0">Judith Tenzer</div>
<div class="t" style="left:1124px;top:333px;font-size:5.4px;color:#f0f0f0">Katharina Frank (...</div>
<div class="t" style="left:1086px;top:389px;font-size:5.4px;color:#f0f0f0">Katarzyna Sznajd...</div>
<svg style="left:1041px;top:25px" width="152" height="380">
  <g fill="#e0e0e0"><rect x="61.5" y="194" width="2" height="4" rx="1"/><rect x="135.5" y="194" width="2" height="4" rx="1"/><rect x="137" y="250" width="2" height="4" rx="1"/><rect x="47" y="307" width="2" height="4" rx="1"/><rect x="137" y="306" width="2" height="4" rx="1"/><rect x="102" y="362" width="2" height="4" rx="1"/></g>
  <g stroke="#e0e0e0" stroke-width="0.6" fill="none"><path d="M60.5 197v1.5h4v-1.5M134.5 197v1.5h4v-1.5M136 253v1.5h4v-1.5M46 310v1.5h4v-1.5M136 309v1.5h4v-1.5M101 365v1.5h4v-1.5"/></g>
</svg>
</body></html>
